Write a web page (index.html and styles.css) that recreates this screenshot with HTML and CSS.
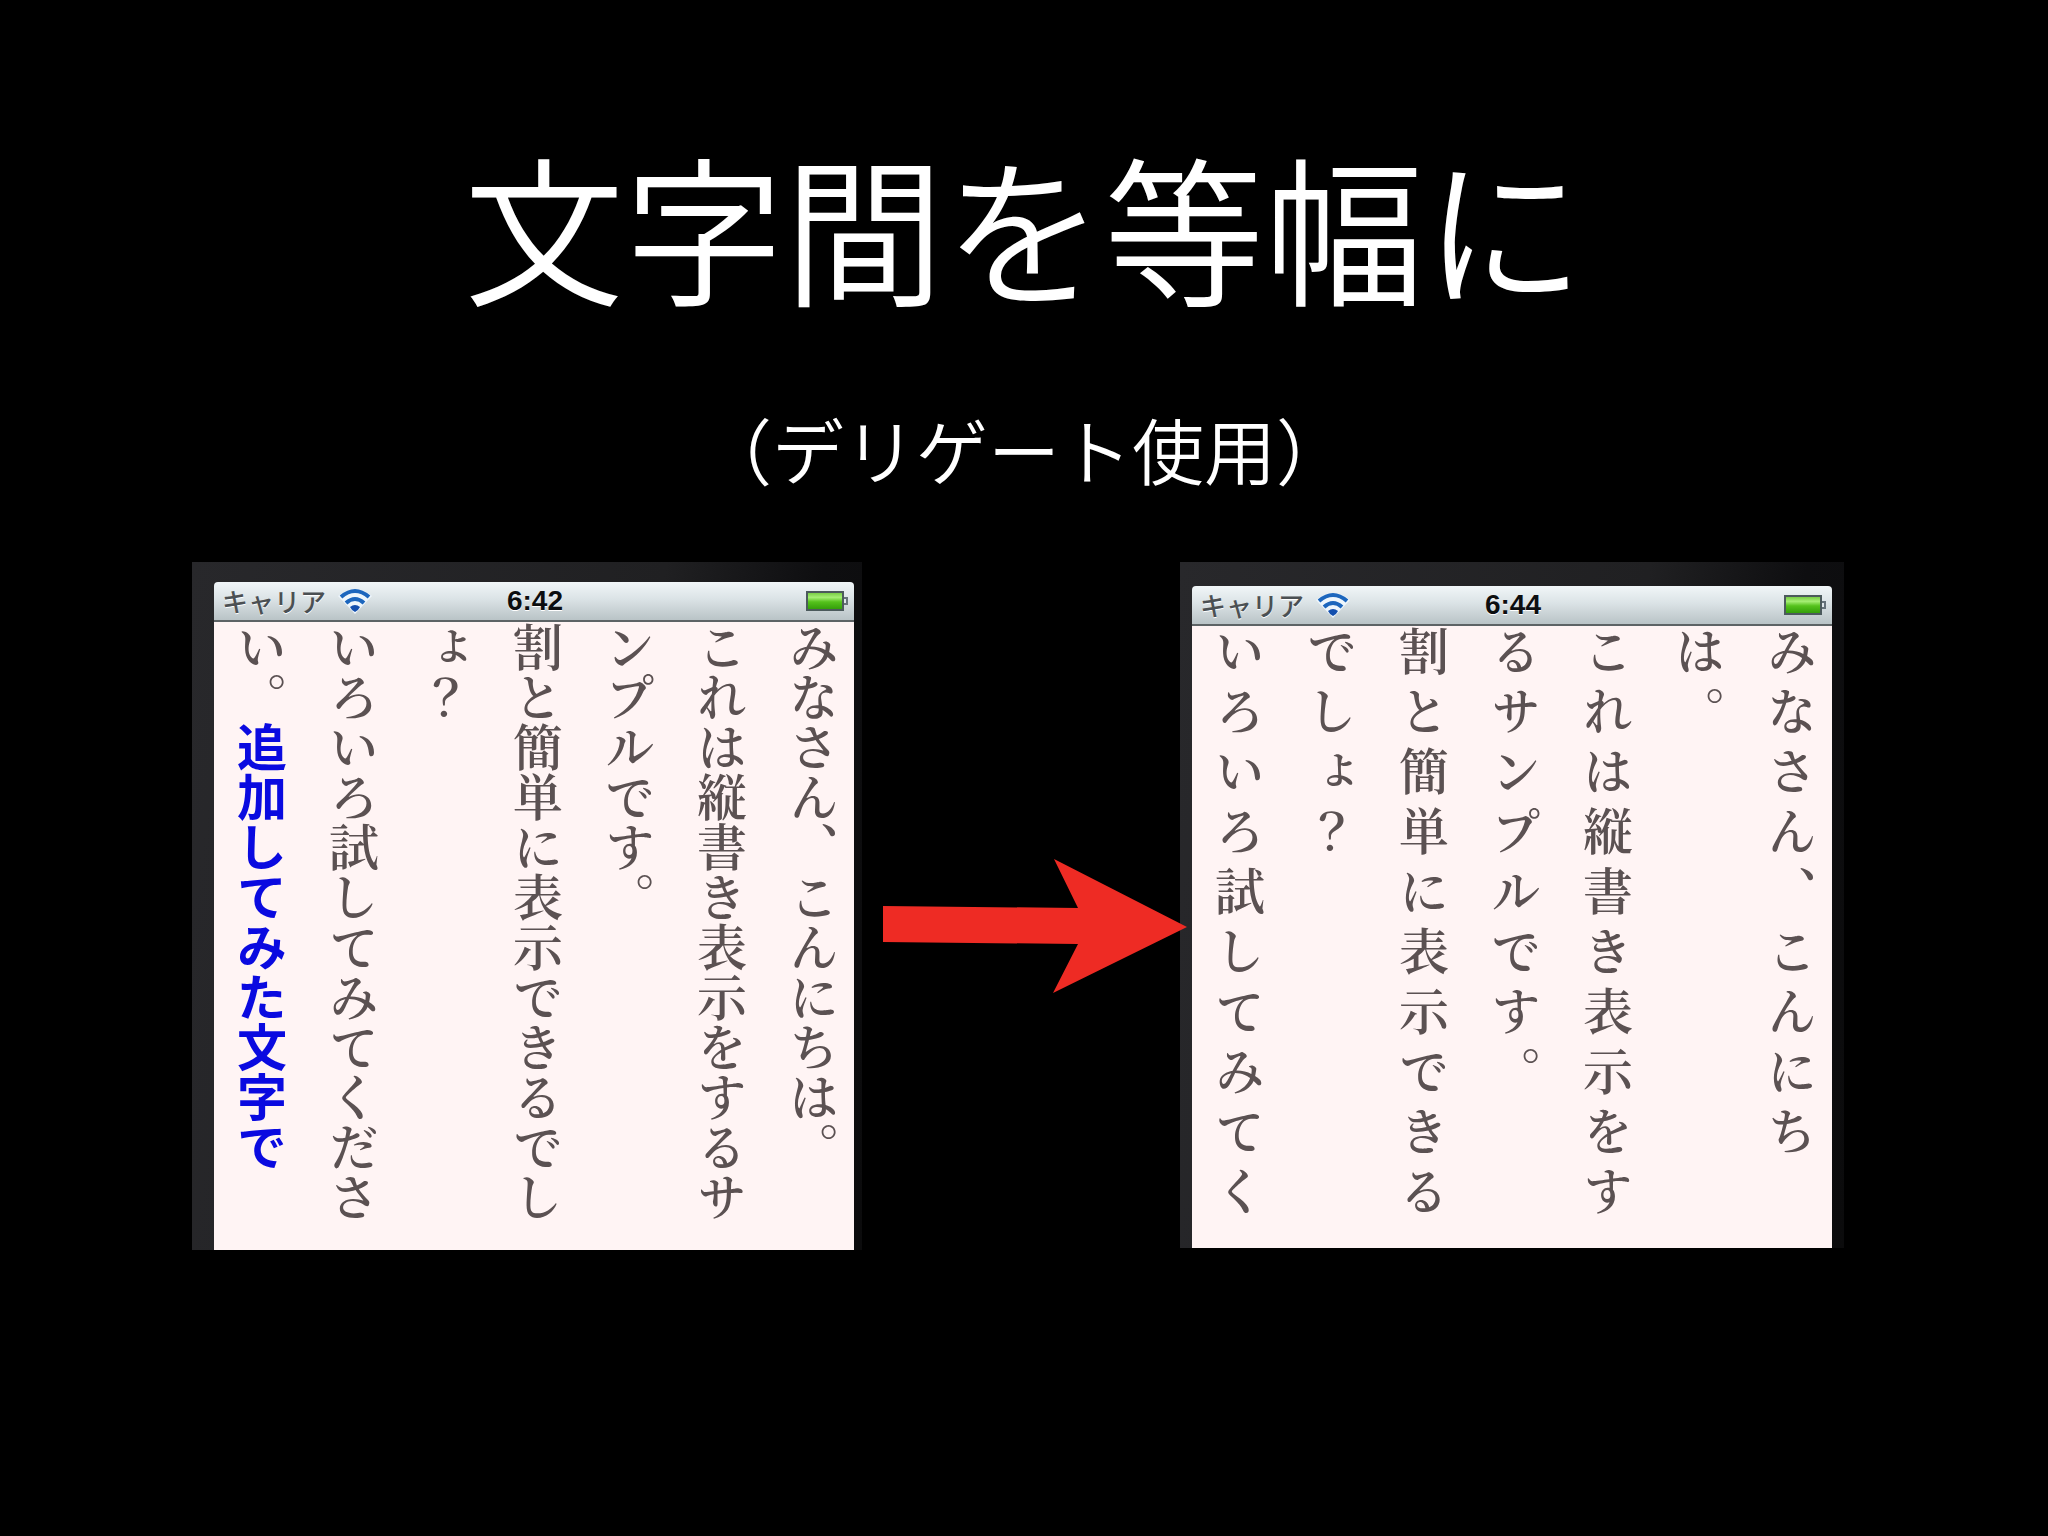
FILE: index.html
```html
<!DOCTYPE html>
<html lang="ja">
<head>
    <meta charset="UTF-8">
    <meta name="viewport" content="width=device-width, initial-scale=1.0">
    <title>文字間を等幅に</title>
    <link rel="stylesheet" href="styles.css">
</head>
<body>
    <main class="slide">
        <h1 class="title">文字間を等幅に</h1>
        <p class="subtitle">（デリゲート使用）</p>

        <div class="compare">
            <section class="phone before">
                <header class="status-bar">
                    <div class="carrier">
                        <span>キャリア</span>
                        <svg class="wifi" viewBox="0 0 34 26" aria-hidden="true">
                            <path class="glow" d="M0 8 Q17 -6 34 8 L17 26 Z"/>
                            <path class="arc" d="M3 9 Q17 -3 31 9"/>
                            <path class="arc" d="M8 15 Q17 7 26 15"/>
                            <path class="dot" d="M12 19 Q17 15 22 19 Q20 23 17 24 Q14 23 12 19 Z"/>
                        </svg>
                    </div>
                    <time class="clock">6:42</time>
                    <svg class="battery" viewBox="0 0 42 20" aria-hidden="true">
                        <defs>
                            <linearGradient id="charge" x1="0" y1="0" x2="0" y2="1">
                                <stop offset="0" stop-color="#6fc63c"/>
                                <stop offset="0.3" stop-color="#a5ee74"/>
                                <stop offset="0.55" stop-color="#55c21c"/>
                                <stop offset="1" stop-color="#2f9a08"/>
                            </linearGradient>
                        </defs>
                        <rect x="1" y="1" width="36" height="18" fill="url(#charge)" stroke="#4c5a5c" stroke-width="2"/>
                        <path d="M38 7 H41 V13 H38" fill="#dfe6ea" stroke="#66727a" stroke-width="2"/>
                    </svg>
                </header>
                <div class="text">
                    <p>みなさん、こんにちは。</p>
                    <p>これは縦書き表示をするサ<br>ンプルです。</p>
                    <p>割と簡単に表示できるでし<br>ょ？</p>
                    <p>いろいろ試してみてくださ<br>い。<strong>追加してみた文字で</strong></p>
                </div>
            </section>

            <svg class="arrow" viewBox="0 0 318 136" aria-hidden="true">
                <path d="M21 48 L216 50 L192 1 L325 69 L191 135 L216 86 L21 84 Z"/>
            </svg>

            <section class="phone after">
                <header class="status-bar">
                    <div class="carrier">
                        <span>キャリア</span>
                        <svg class="wifi" viewBox="0 0 34 26" aria-hidden="true">
                            <path class="glow" d="M0 8 Q17 -6 34 8 L17 26 Z"/>
                            <path class="arc" d="M3 9 Q17 -3 31 9"/>
                            <path class="arc" d="M8 15 Q17 7 26 15"/>
                            <path class="dot" d="M12 19 Q17 15 22 19 Q20 23 17 24 Q14 23 12 19 Z"/>
                        </svg>
                    </div>
                    <time class="clock">6:44</time>
                    <svg class="battery" viewBox="0 0 42 20" aria-hidden="true">
                        <rect x="1" y="1" width="36" height="18" fill="url(#charge)" stroke="#4c5a5c" stroke-width="2"/>
                        <path d="M38 7 H41 V13 H38" fill="#dfe6ea" stroke="#66727a" stroke-width="2"/>
                    </svg>
                </header>
                <div class="text">
                    <p>みなさん、こんにち<br>は。</p>
                    <p>これは縦書き表示をす<br>るサンプルです。</p>
                    <p>割と簡単に表示できる<br>でしょ？</p>
                    <p>いろいろ試してみてく</p>
                </div>
            </section>
        </div>
    </main>
</body>
</html>
```
FILE: styles.css
```css
* {
    box-sizing: border-box;
}
body {
    margin: 0;
    background: #000;
    color: #fff;
    font-family: "Noto Sans CJK JP", sans-serif;
}
.slide {
    min-height: 100vh;
    padding: 128px 0;
}
.title {
    margin: 0;
    font-size: 160px;
    font-weight: 350;
    line-height: 192px;
    text-align: center;
}
.subtitle {
    margin: 80px 0 66px;
    font-size: 72px;
    font-weight: 350;
    line-height: 96px;
    text-align: center;
}
.compare {
    display: flex;
    align-items: flex-start;
    padding: 0 204px 0 192px;
}

/* phones */
.phone {
    background: linear-gradient(100deg, #28282b 0%, #202022 60%, #0e0e10 80%, #0b0b0c 100%);
}
.before {
    padding: 20px 8px 0 22px;
}
.after {
    padding: 24px 12px 0 12px;
}
.status-bar {
    display: grid;
    grid-template-columns: 1fr auto 1fr;
    align-items: center;
    height: 40px;
    padding: 0 6px 0 8px;
    border-bottom: 2px solid #5d6365;
    border-radius: 4px 4px 0 0;
    background: linear-gradient(#f1f6f8, #dbe3e6 45%, #b9c3c6);
    color: #4b5053;
    text-shadow: 0 1px 0 #fff;
}
.carrier {
    display: flex;
    align-items: center;
    gap: 12px;
    font-size: 26px;
    font-weight: 500;
    line-height: 36px;
}
.clock {
    color: #0c0e10;
    font-family: "Liberation Sans", Arial, sans-serif;
    font-size: 28px;
    font-weight: bold;
    line-height: 36px;
}
.wifi {
    width: 34px;
    height: 26px;
}
.wifi .glow {
    fill: #eef6fc;
}
.wifi .arc {
    fill: none;
    stroke: #1c66bd;
    stroke-width: 4;
}
.wifi .dot {
    fill: #134fae;
}
.battery {
    justify-self: end;
    width: 42px;
    height: 20px;
}

/* vertical text */
.text {
    width: 640px;
    height: 628px;
    background: #fff4f4;
    color: #5b5152;
    font-family: "Hiragino Mincho ProN", "Noto Serif CJK JP", "Noto Sans CJK JP", serif;
    font-size: 50px;
    font-weight: 600;
    line-height: 92px;
    writing-mode: vertical-rl;
    overflow: hidden;
}
.text p {
    margin: 0;
}
.text p:first-child {
    margin-right: -6px;
}
.text strong {
    color: #0a0ae0;
    font-family: "Noto Sans CJK JP", sans-serif;
    font-weight: bold;
}
.after .text {
    height: 622px;
    letter-spacing: 10px;
}

/* arrow between the two phones */
.arrow {
    position: relative;
    z-index: 1;
    flex: 1;
    align-self: center;
    margin-top: 40px;
    min-width: 0;
    overflow: visible;
    fill: #ee2b24;
}
```
